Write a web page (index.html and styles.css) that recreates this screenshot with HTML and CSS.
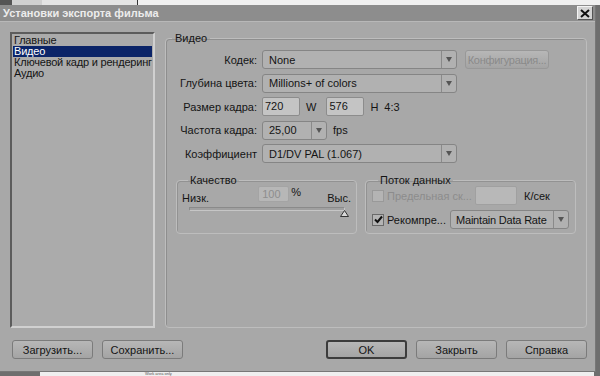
FILE: index.html
```html
<!DOCTYPE html>
<html lang="ru">
<head>
  <meta charset="UTF-8">
  <title>Установки экспорта фильма</title>
  <link rel="stylesheet" href="styles.css">
</head>
<body>

  <div class="desk-top">
    <span class="seg seg-a"></span>
    <span class="seg seg-b"></span>
    <span class="seg seg-c"></span>
  </div>

  <div class="dialog">
    <div class="titlebar">
      <span class="title">Установки экспорта фильма</span>
      <span class="close-btn">
        <svg width="10" height="9" viewBox="0 0 10 9"><path d="M1 1 L9 8 M9 1 L1 8" stroke="#111" stroke-width="2"/></svg>
      </span>
    </div>

    <div class="main">
      <ul class="side-list">
        <li>Главные</li>
        <li class="selected">Видео</li>
        <li>Ключевой кадр и рендеринг</li>
        <li>Аудио</li>
      </ul>

      <fieldset class="panel">
        <legend>Видео</legend>

        <div class="rows">
          <label>Кодек:</label>
          <div class="line">
            <div class="select wide"><span>None</span><i class="arrow"></i></div>
            <button class="btn small" disabled>Конфигурация...</button>
          </div>

          <label>Глубина цвета:</label>
          <div class="line">
            <div class="select wide"><span>Millions+ of colors</span><i class="arrow"></i></div>
          </div>

          <label>Размер кадра:</label>
          <div class="line">
            <div class="field size">720</div>
            <span class="unit w">W</span>
            <div class="field size">576</div>
            <span class="unit">H</span>
            <span class="unit ratio">4:3</span>
          </div>

          <label>Частота кадра:</label>
          <div class="line">
            <div class="select fps"><span>25,00</span><i class="arrow"></i></div>
            <span class="unit">fps</span>
          </div>

          <label>Коэффициент</label>
          <div class="line">
            <div class="select wide"><span>D1/DV PAL (1.067)</span><i class="arrow"></i></div>
          </div>
        </div>

        <div class="groups">
          <fieldset class="group quality">
            <legend>Качество</legend>
            <div class="q-top">
              <span>Низк.</span>
              <span class="q-mid"><span class="field pct">100</span> %</span>
              <span>Выс.</span>
            </div>
            <div class="slider">
              <div class="track"></div>
              <svg class="thumb" width="9" height="7" viewBox="0 0 9 7"><path d="M4.5 0.5 L8.5 6.5 L0.5 6.5 Z" fill="#d8d8d8" stroke="#333"/></svg>
            </div>
          </fieldset>

          <fieldset class="group stream">
            <legend>Поток данных</legend>
            <div class="s-row">
              <span class="check off"></span>
              <span class="dim s-label">Предельная ск...</span>
              <div class="field rate"></div>
              <span class="unit">К/сек</span>
            </div>
            <div class="s-row">
              <span class="check">
                <svg width="9" height="9" viewBox="0 0 9 9"><path d="M1 4.5 L3.5 7 L8 1.5" stroke="#111" stroke-width="2" fill="none"/></svg>
              </span>
              <span class="s-label">Рекомпре...</span>
              <div class="select mode"><span>Maintain Data Rate</span><i class="arrow"></i></div>
            </div>
          </fieldset>
        </div>
      </fieldset>
    </div>

    <div class="footer">
      <div class="btn-set">
        <button class="btn">Загрузить...</button>
        <button class="btn">Сохранить...</button>
      </div>
      <div class="btn-set">
        <button class="btn default">OK</button>
        <button class="btn">Закрыть</button>
        <button class="btn">Справка</button>
      </div>
    </div>
  </div>

  <div class="desk-bottom">
    <span class="under">Work area only</span>
  </div>

</body>
</html>
```

FILE: styles.css
```css
/* Reset */
* {
  margin: 0;
  padding: 0;
  box-sizing: border-box;
}

body {
  width: 600px;
  height: 376px;
  overflow: hidden;
  background: #6e6e6e;
  font-family: 'Liberation Sans', Arial, sans-serif;
  font-size: 11px;
  color: #141414;
  display: flex;
  flex-direction: column;
}

/* Bits of the desktop around the dialog */
.desk-top {
  height: 5px;
  background: #e4e4e4;
  display: flex;
}

.seg-a { width: 12px; background: #555; }
.seg-b { width: 30px; background: #d0d0d0; }
.seg-c { flex: 1; border-left: 1px solid #333; margin-left: 95px; background: #f0f0f0; }

.desk-bottom {
  height: 4px;
  background: #efefef;
  margin: 0 6px 0 40px;
  display: flex;
  align-items: flex-start;
  padding-left: 105px;
}

.under {
  font-size: 4px;
  line-height: 4px;
  color: #555;
}

/* Dialog window */
.dialog {
  height: 367px;
  margin-right: 4px;
  background: #a8a8a8;
  border-right: 1px solid #777;
  border-bottom: 1px solid #777;
  display: flex;
  flex-direction: column;
}

.titlebar {
  height: 17px;
  background: #8d8d8d;
  border-bottom: 1px solid #b8b8b8;
  display: flex;
  align-items: center;
  justify-content: space-between;
  padding: 0 2px 0 3px;
}

.title {
  color: #ececec;
  font-weight: bold;
  font-size: 11px;
}

.close-btn {
  width: 16px;
  height: 14px;
  background: #d4d4d4;
  border: 1px solid #555;
  border-top-color: #f4f4f4;
  border-left-color: #f4f4f4;
  display: flex;
  align-items: center;
  justify-content: center;
}

.main {
  display: flex;
  gap: 10px;
  padding: 10px 8px 0 10px;
  height: 306px;
}

/* Left list */
.side-list {
  list-style: none;
  width: 146px;
  background: #ababab;
  border: 2px solid #d0d0d0;
  border-top-color: #5c5c5c;
  border-left-color: #5c5c5c;
  padding: 1px 1px;
  line-height: 11px;
  white-space: nowrap;
  letter-spacing: -0.2px;
}

.side-list li {
  padding-left: 1px;
  height: 11px;
}

.side-list .selected {
  background: #0b2468;
  color: #fff;
}

/* Right panel */
.panel {
  flex: 1;
  border: 1px solid #bdbdbd;
  border-radius: 4px;
  box-shadow: inset 1px 1px 0 #8e8e8e;
  padding: 6px 10px 0 0;
}

.panel > legend {
  margin-left: 6px;
  padding: 0 3px;
}

.rows {
  display: grid;
  grid-template-columns: 91px 1fr;
  column-gap: 5px;
  row-gap: 4.5px;
  align-items: center;
}

.rows label {
  text-align: right;
  white-space: nowrap;
}

.line {
  display: flex;
  align-items: center;
  gap: 6px;
  height: 19px;
}

.select {
  height: 19px;
  background: #b1b1b1;
  border: 1px solid #858585;
  border-radius: 3px;
  display: flex;
  align-items: center;
  justify-content: space-between;
  padding-left: 6px;
  white-space: nowrap;
  overflow: hidden;
}

.select .arrow {
  flex: none;
  width: 15px;
  height: 100%;
  border-left: 1px solid #8a8a8a;
  position: relative;
}

.select .arrow::after {
  content: "";
  position: absolute;
  left: 4px;
  top: 6px;
  border-left: 3px solid transparent;
  border-right: 3px solid transparent;
  border-top: 5px solid #555;
}

.wide { width: 195px; }
.fps { width: 65px; }

.field {
  height: 19px;
  background: #c4c4c4;
  border: 1px solid #8c8c8c;
  border-radius: 2px;
  padding: 2px 2px;
}

.size { width: 38px; }

.unit.w { margin: 0 4px 0 0; }

.btn {
  font-family: inherit;
  font-size: 11px;
  color: #141414;
  height: 19px;
  width: 81px;
  background: linear-gradient(#b7b7b7, #a4a4a4);
  border: 1px solid #7b7b7b;
  border-radius: 3px;
}

.btn.small {
  width: 84px;
  margin-left: 2px;
  padding: 0;
  letter-spacing: -0.3px;
  color: #8a8a8a;
  border-color: #989898;
  white-space: nowrap;
}

.btn.default {
  border: 2px solid #3c3c3c;
}

/* Quality and data rate groups */
.groups {
  display: flex;
  gap: 8px;
  margin: 11px 0 0 10px;
}

.group {
  height: 60px;
  border: 1px solid #bdbdbd;
  border-radius: 4px;
  box-shadow: inset 1px 1px 0 #929292;
}

.group legend {
  margin-left: 6px;
  padding: 0 2px;
}

.quality {
  width: 181px;
  padding: 0 5px;
}

.q-top {
  display: flex;
  justify-content: space-between;
  align-items: flex-end;
  height: 18px;
}

.q-mid {
  display: flex;
  align-items: flex-start;
  gap: 2px;
  margin-left: 23px;
  align-self: flex-start;
}

.pct {
  width: 31px;
  height: 16px;
  padding: 1px 3px;
  color: #8e8e8e;
  background: #b7b7b7;
  border-color: #a4a4a4;
}

.slider {
  position: relative;
  margin: 3px 6px 0 7px;
}

.track {
  height: 4px;
  border: 1px solid #8a8a8a;
  border-bottom-color: #c6c6c6;
  border-right-color: #c6c6c6;
  background: #a0a0a0;
}

.thumb {
  position: absolute;
  right: -4px;
  top: 3px;
}

.stream {
  width: 210px;
  padding: 0 6px;
}

.s-row {
  display: flex;
  align-items: center;
  height: 19px;
}

.s-row + .s-row {
  margin-top: 5px;
}

.check {
  flex: none;
  width: 12px;
  height: 12px;
  border: 1px solid #6a6a6a;
  background: #b4b4b4;
  display: flex;
  align-items: center;
  justify-content: center;
  margin-right: 3px;
}

.check.off {
  border-color: #999;
}

.s-label {
  width: 86px;
  white-space: nowrap;
}

.dim {
  color: #8c8c8c;
}

.rate {
  width: 42px;
  margin-left: 2px;
  margin-right: 7px;
  background: #b8b8b8;
  border-color: #a0a0a0;
}

.select.mode {
  width: 119px;
  margin-left: -23px;
  letter-spacing: -0.2px;
  padding-left: 5px;
}

/* Buttons row */
.footer {
  display: flex;
  justify-content: space-between;
  padding: 12px 8px 0 12px;
}

.btn-set {
  display: flex;
  gap: 9px;
}
```
